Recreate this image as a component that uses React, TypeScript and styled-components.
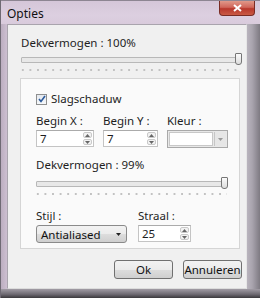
import React from "react";
import styled, { createGlobalStyle } from "styled-components";

const Global = createGlobalStyle`
  html, body { margin: 0; padding: 0; background: #ffffff; }
  body { font-family: "Noto Sans", "Open Sans", Arial, sans-serif; }
`;

const Window = styled.div`
  width: 260px;
  height: 298px;
  display: grid;
  grid-template-rows: 24px 1fr 9px;
  grid-template-columns: 6px 1fr 13px;
  background: #cdbfd1;
  overflow: hidden;
  position: relative;
  box-sizing: border-box;
  border-left: 1px solid #6f6a74;
  font-size: 11.5px;
  color: #1e1e1e;
`;

const TitleBar = styled.div`
  grid-column: 1 / 4;
  display: flex;
  align-items: center;
  padding-left: 6px;
  background: linear-gradient(180deg, #d5c6d9 0%, #dccfe0 60%, #d9cbdc 100%);
  border-top: 1px solid #8d8592;
  position: relative;
`;

const Title = styled.span`
  font-size: 12px;
  color: #111;
  margin-top: 1px;
`;

const CloseButton = styled.div`
  position: absolute;
  right: 5px;
  top: 0;
  width: 36px;
  height: 15px;
  border: 1px solid #7a2c24;
  border-top: none;
  border-radius: 0 0 4px 4px;
  background: linear-gradient(180deg, #e0998a 0%, #d0665a 45%, #b8382c 55%, #c95a45 100%);
  display: flex;
  align-items: center;
  justify-content: center;
  box-sizing: border-box;
`;

const SideFrame = styled.div<{ $right?: boolean }>`
  background: ${(p) =>
    p.$right
      ? "linear-gradient(90deg, #b9b4bd 0%, #a9a4ae 40%, #7e7a82 100%)"
      : "linear-gradient(90deg, #bcaec0 0%, #cdbfd1 100%)"};
`;

const BottomFrame = styled.div`
  grid-column: 1 / 4;
  background: linear-gradient(180deg, #a19ca5 0%, #6c6870 60%, #3a383c 100%);
`;

const Client = styled.div`
  background: #f0f0f0;
  border: 1px solid #a9a4ad;
  border-right-color: #e6e6e6;
  border-bottom-color: #dcdcdc;
  display: flex;
  flex-direction: column;
  box-sizing: border-box;
  min-width: 0;
`;

const TopSection = styled.div`
  display: flex;
  flex-direction: column;
  padding: 11px 7px 0 13px;
  height: 53px;
  box-sizing: border-box;
`;

const Label = styled.div`
  font-size: 11.5px;
  line-height: 14px;
  color: #1e1e1e;
  white-space: nowrap;
`;

const SliderWrap = styled.div<{ $w: number }>`
  width: ${(p) => p.$w}px;
  margin-top: 4px;
  display: flex;
  flex-direction: column;
`;

const Track = styled.div`
  position: relative;
  height: 4px;
  margin-top: 3px;
  border: 1px solid #b8b8b8;
  border-radius: 1px;
  background: #e8e8e8;
`;

const Thumb = styled.div`
  position: absolute;
  right: -2px;
  top: -5px;
  width: 5px;
  height: 10px;
  border: 1px solid #767676;
  border-radius: 1px 1px 3px 3px;
  background: linear-gradient(180deg, #fbfbfb, #dcdcdc);
`;

const Ticks = styled.div`
  margin-top: 6px;
  height: 2px;
  background-image: radial-gradient(circle, #c2c2c2 0.7px, transparent 1px);
  background-size: 7.6px 2px;
  background-position: -2px 0;
`;

const Panel = styled.div`
  margin: 0 6px 0 12px;
  height: 171px;
  background: #fafafa;
  border: 1px solid #d5d5d5;
  box-sizing: border-box;
  padding: 13px 0 0 15px;
  display: flex;
  flex-direction: column;
`;

const CheckRow = styled.label`
  display: flex;
  align-items: center;
  gap: 4px;
`;

const CheckBox = styled.span`
  width: 11px;
  height: 11px;
  border: 1px solid #8e8f8f;
  background: linear-gradient(180deg, #e4e8ee, #f6f8fa);
  box-sizing: border-box;
  display: flex;
  align-items: center;
  justify-content: center;
`;

const FieldsRow = styled.div<{ $top: number }>`
  display: flex;
  margin-top: ${(p) => p.$top}px;
`;

const Field = styled.div<{ $w: number }>`
  width: ${(p) => p.$w}px;
  display: flex;
  flex-direction: column;
  gap: 2px;
`;

const Input = styled.div<{ $w: number }>`
  width: ${(p) => p.$w}px;
  height: 17px;
  border: 1px solid #c4c4c4;
  border-top-color: #ababab;
  background: #fff;
  box-sizing: border-box;
  display: flex;
  align-items: center;
  justify-content: space-between;
  padding-left: 3px;
`;

const Spin = styled.div`
  width: 9px;
  height: 13px;
  margin-right: 1px;
  display: flex;
  flex-direction: column;
  gap: 1px;
`;

const SpinHalf = styled.div`
  flex: 1;
  border: 1px solid #c9c9c9;
  border-radius: 2px;
  background: #f2f2f2;
  display: flex;
  align-items: center;
  justify-content: center;
`;

const ColorBox = styled.div`
  width: 61px;
  height: 18px;
  border: 1px solid #a9a9a9;
  background: #e8e8e8;
  box-sizing: border-box;
  display: flex;
  padding: 1px;
  gap: 1px;
`;

const ColorSwatch = styled.div`
  flex: 1;
  background: #fff;
  border: 1px solid #c8c8c8;
`;

const ColorDrop = styled.div`
  width: 11px;
  background: #e6e6e6;
  border-left: 1px solid #c6c6c6;
  display: flex;
  align-items: center;
  justify-content: center;
`;

const Select = styled.div`
  width: 91px;
  height: 18px;
  border: 1px solid #8a8a8a;
  border-radius: 3px;
  background: linear-gradient(180deg, #f2f2f2 0%, #ebebeb 50%, #dddddd 51%, #cfcfcf 100%);
  box-sizing: border-box;
  display: flex;
  align-items: center;
  justify-content: space-between;
  padding: 0 5px 0 4px;
  font-size: 11.5px;
  color: #111;
`;

const ButtonRow = styled.div`
  display: flex;
  justify-content: flex-end;
  gap: 10px;
  padding: 11px 4px 0 0;
`;

const Button = styled.div`
  width: 59px;
  height: 19px;
  border: 1px solid #707070;
  border-radius: 3px;
  background: linear-gradient(180deg, #f2f2f2 0%, #ebebeb 50%, #dddddd 51%, #cfcfcf 100%);
  box-sizing: border-box;
  display: flex;
  align-items: center;
  justify-content: center;
  font-size: 11.5px;
  color: #111;
`;

const Arrow = ({ up, color = "#555" }: { up?: boolean; color?: string }) => (
  <svg width="5" height="3" viewBox="0 0 5 3">
    <path d={up ? "M0 3 L2.5 0 L5 3 Z" : "M0 0 L2.5 3 L5 0 Z"} fill={color} />
  </svg>
);

const SpinButtons = () => (
  <Spin>
    <SpinHalf>
      <Arrow up color="#666" />
    </SpinHalf>
    <SpinHalf>
      <Arrow color="#666" />
    </SpinHalf>
  </Spin>
);

const Slider = ({ width }: { width: number }) => (
  <SliderWrap $w={width}>
    <Track>
      <Thumb />
    </Track>
    <Ticks />
  </SliderWrap>
);

export default function App() {
  return (
    <>
      <Global />
      <Window>
        <TitleBar>
          <Title>Opties</Title>
          <CloseButton>
            <svg width="9" height="8" viewBox="0 0 9 8">
              <path d="M1 1 L8 7 M8 1 L1 7" stroke="#fff" strokeWidth="2" />
            </svg>
          </CloseButton>
        </TitleBar>
        <SideFrame />
        <Client>
          <TopSection>
            <Label>Dekvermogen : 100%</Label>
            <Slider width={220} />
          </TopSection>
          <Panel>
            <CheckRow>
              <CheckBox>
                <svg width="8" height="8" viewBox="0 0 8 8">
                  <path d="M1 4 L3 6.5 L7 1" stroke="#2b5a9c" strokeWidth="1.6" fill="none" />
                </svg>
              </CheckBox>
              <Label>Slagschaduw</Label>
            </CheckRow>
            <FieldsRow $top={8}>
              <Field $w={67}>
                <Label>Begin X :</Label>
                <Input $w={58}>
                  <span>7</span>
                  <SpinButtons />
                </Input>
              </Field>
              <Field $w={64}>
                <Label>Begin Y :</Label>
                <Input $w={55}>
                  <span>7</span>
                  <SpinButtons />
                </Input>
              </Field>
              <Field $w={62}>
                <Label>Kleur :</Label>
                <ColorBox>
                  <ColorSwatch />
                  <ColorDrop>
                    <Arrow color="#999" />
                  </ColorDrop>
                </ColorBox>
              </Field>
            </FieldsRow>
            <FieldsRow $top={10}>
              <Field $w={192}>
                <Label>Dekvermogen : 99%</Label>
                <Slider width={191} />
              </Field>
            </FieldsRow>
            <FieldsRow $top={14}>
              <Field $w={102}>
                <Label>Stijl :</Label>
                <Select>
                  <span>Antialiased</span>
                  <Arrow color="#222" />
                </Select>
              </Field>
              <Field $w={60}>
                <Label>Straal :</Label>
                <Input $w={53}>
                  <span>25</span>
                  <SpinButtons />
                </Input>
              </Field>
            </FieldsRow>
          </Panel>
          <ButtonRow>
            <Button>Ok</Button>
            <Button>Annuleren</Button>
          </ButtonRow>
        </Client>
        <SideFrame $right />
        <BottomFrame />
      </Window>
    </>
  );
}
